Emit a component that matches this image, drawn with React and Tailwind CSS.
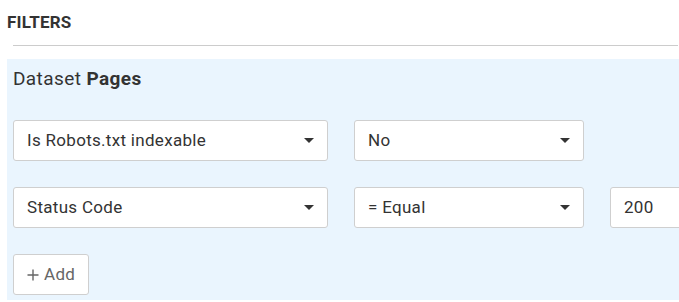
export default function App() {
  const font = { fontFamily: "Roboto, 'Liberation Sans', sans-serif" };
  const Caret = () => (
    <svg width="10" height="5" viewBox="0 0 10 5" className="shrink-0">
      <path d="M0 0 L10 0 L5 5 Z" fill="#333" />
    </svg>
  );
  const Select = ({ label, w }) => (
    <div
      className={`${w} h-[41px] shrink-0 bg-white border border-[#cfcfcf] rounded-[3px] flex items-center justify-between pl-[13px] pr-[13px] text-[17px] tracking-[0.3px] text-[#333]`}
    >
      <span>{label}</span>
      <Caret />
    </div>
  );
  return (
    <div className="w-[679px] h-[302px] overflow-hidden bg-white" style={font}>
      <div className="pl-[7px] pt-[12px]">
        <div className="text-[17px] leading-[20px] font-bold tracking-[0.2px] text-[#333]">FILTERS</div>
      </div>
      <div className="ml-[13px] mt-[13px] h-px bg-[#cccccc] w-[665px]" />
      <div className="ml-[7px] mt-[13px] w-[700px] h-[241px] bg-[#eaf5fe] pl-[6px] pt-[8px] flex flex-col">
        <div className="text-[19px] leading-[24px] tracking-[0.4px] text-[#333]">
          Dataset <span className="font-bold">Pages</span>
        </div>
        <div className="mt-[29px] flex gap-[26px]">
          <Select label="Is Robots.txt indexable" w="w-[315px]" />
          <Select label="No" w="w-[230px]" />
        </div>
        <div className="mt-[26px] flex gap-[26px]">
          <Select label="Status Code" w="w-[315px]" />
          <Select label="= Equal" w="w-[230px]" />
          <div className="w-[230px] h-[41px] shrink-0 bg-white border border-[#cfcfcf] rounded-[3px] flex items-center pl-[13px] text-[17px] tracking-[0.3px] text-[#333]">
            200
          </div>
        </div>
        <div className="mt-[26px]">
          <button className="h-[41px] w-[76px] bg-white border border-[#cfcfcf] rounded-[3px] flex items-center pl-[13px] text-[17px] tracking-[0.3px] text-[#666]">
            <svg width="12" height="12" viewBox="0 0 12 12" className="mr-[5px] shrink-0">
              <path d="M6 0.5 V11.5 M0.5 6 H11.5" stroke="#666" strokeWidth="1.4" />
            </svg>
            <span>Add</span>
          </button>
        </div>
      </div>
    </div>
  );
}
